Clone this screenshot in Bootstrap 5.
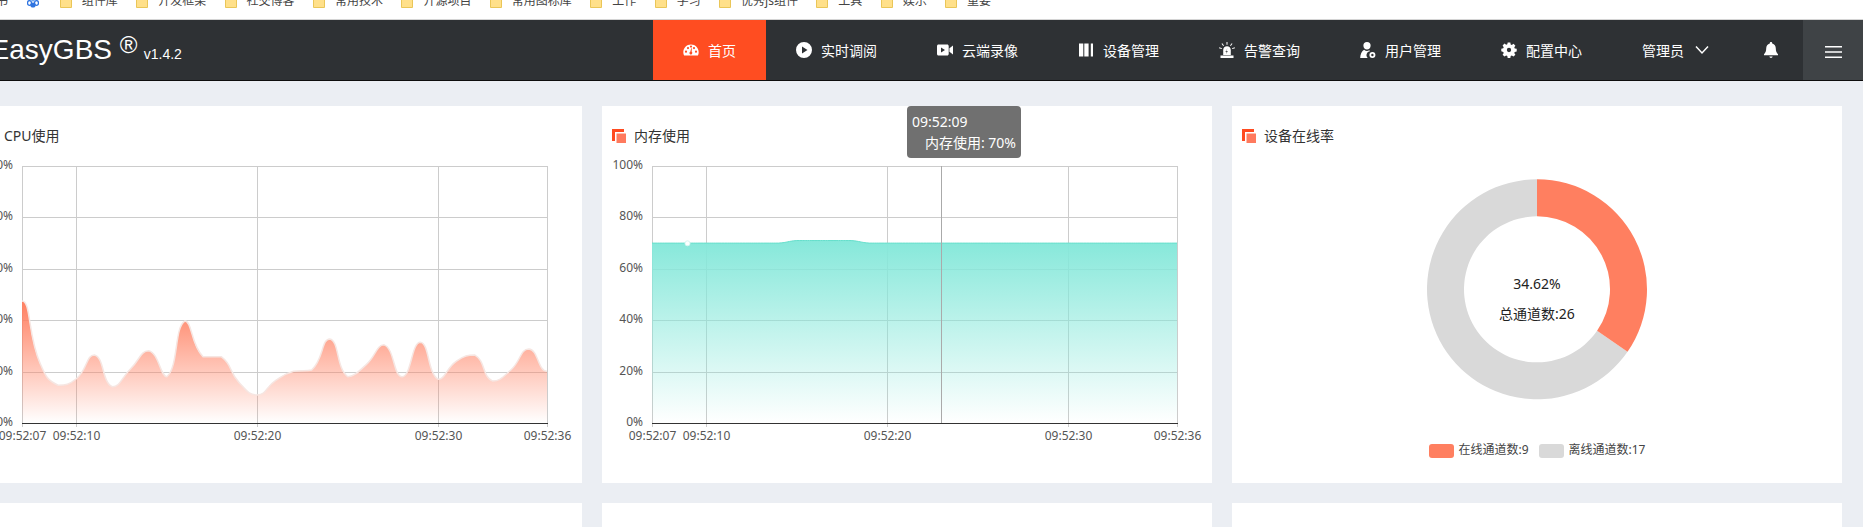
<!DOCTYPE html>
<html lang="zh-CN">
<head>
  <meta charset="UTF-8">
  <title>EasyGBS</title>
  <link href="https://cdn.jsdelivr.net/npm/bootstrap@5.3.3/dist/css/bootstrap.min.css" rel="stylesheet">
  <style>
    html, body { height: 527px; overflow: hidden; }
    body { background: #ebeef3; font-family: "Noto Sans", "Noto Sans CJK SC", sans-serif; font-size: 14px; color: #333; }

    .bookmarks { height: 20px; background: #fff; border-bottom: 1px solid #d4d4d4; overflow: hidden; font-size: 12px; line-height: 14px; color: #444; white-space: nowrap; }
    .bookmarks-row { margin-top: -6px; margin-left: -4px; gap: 18.4px; }
    .bm { display: flex; gap: 10px; align-items: center; }
    .bm-blue { margin-left: 1px; margin-right: 2px; }

    .topbar { height: 61px; background: #2e3134; border-bottom: 1px solid #0d0d0d; padding: 0; align-items: stretch; flex-wrap: nowrap; color: #fff; }
    .brand-name { margin-left: -9.4px; font-family: "Liberation Sans", sans-serif; font-size: 28px; line-height: 60px; white-space: nowrap; }
    .brand-reg { font-size: 24px; position: relative; top: -6px; }
    .brand-ver { font-size: 14px; margin-left: -1.5px; }
    .menu-item { padding: 0 30px; gap: 9px; color: #fff; text-decoration: none; white-space: nowrap; }
    .menu-item svg { width: 16px; height: 16px; flex: none; fill: #fff; }
    .menu-item.on { background: #ff4d21; }
    .menu-user { gap: 11px; }
    .menu-item svg.chevron { width: 14px; height: 14px; fill: none; }
    .menu-bell { padding: 0 24px; }
    .menu-toggle { width: 60px; background: #3f4346; padding-top: 3px; }

    .board { width: 1891px; height: 446px; overflow: hidden; margin-left: -28px; padding: 25px 21px 0 0; display: grid; grid-template-columns: repeat(3, 1fr); gap: 20px; }
    .panel { background: #fff; height: 377px; padding-top: 20px; position: relative; }
    .panel-title { padding-left: 10px; height: 20px; line-height: 20px; gap: 8px; }
    .title-mark { width: 14px; height: 14px; }
    .title-mark svg { display: block; }
    .panel svg.chart { display: block; width: 610px; height: 337px; }
    .chart text { font-family: "Noto Sans", "Noto Sans CJK SC", sans-serif; }
    .chart .ax { font-size: 12px; fill: #555; }
    .chart .lg { font-size: 12px; fill: #444; }
    .chart .mid { font-size: 14px; fill: #222; }
    .tip { position: absolute; left: 305px; top: 0; width: 114px; height: 52px; padding: 5px; background: #707070; border-radius: 4px; color: #fff; line-height: 21px; }
  </style>
</head>
<body>
  <div class="bookmarks">
    <div class="d-flex bookmarks-row" id="bookmarks"></div>
  </div>

  <nav class="navbar topbar">
    <div class="brand-name">EasyGBS <span class="brand-reg">®</span> <span class="brand-ver">v1.4.2</span></div>
    <div class="d-flex ms-auto">
      <a class="menu-item on d-flex align-items-center" href="#">
        <svg viewBox="0 0 16 16"><path d="M8 2.400C3.600 2.400.3 5.900.3 10.200c0 1.300.3 2.400.8 3.400h13.800c.5-1 .8-2.100.8-3.400 0-4.300-3.300-7.800-7.700-7.800zM3 10.800a1.100 1.100 0 1 1 0-2.200 1.100 1.100 0 0 1 0 2.200zm2-3.600a1.100 1.100 0 1 1 0-2.200 1.100 1.100 0 0 1 0 2.200zm3.900 4.800a1.400 1.400 0 0 1-2.500-.9c0-.6.4-1.100.9-1.300l.8-3.300c.1-.3.700-.2.700.1l-.1 3.200c.7.400.900 1.400.2 2.200zM8 5.700A1.100 1.100 0 1 1 8 3.500a1.100 1.100 0 0 1 0 2.200zm3 1.500a1.100 1.100 0 1 1 0-2.200 1.100 1.100 0 0 1 0 2.200zm2 3.600a1.100 1.100 0 1 1 0-2.200 1.100 1.100 0 0 1 0 2.200z" fill-rule="evenodd"/></svg>
        首页
      </a>
      <a class="menu-item d-flex align-items-center" href="#">
        <svg viewBox="0 0 16 16"><path d="M8 0a8 8 0 1 0 0 16A8 8 0 0 0 8 0zM6 4.500l5.500 3.500L6 11.500z" fill-rule="evenodd"/></svg>
        实时调阅
      </a>
      <a class="menu-item d-flex align-items-center" href="#">
        <svg viewBox="0 0 16 16"><path d="M1.500 2.400h8.700c.8 0 1.500.7 1.500 1.500v8.200c0 .8-.7 1.500-1.500 1.500H1.500C.7 13.600 0 12.900 0 12.100V3.900c0-.8.7-1.500 1.500-1.500zM4 5.600v4.800L8 8z" fill-rule="evenodd"/><path d="M12.400 6.300 16 3.600v8.800l-3.600-2.700z"/></svg>
        云端录像
      </a>
      <a class="menu-item d-flex align-items-center" href="#">
        <svg viewBox="0 0 16 16"><path d="M1 1.500h4.300v13H1zM6.300 1.500h4.300v13H6.300zM12.800 1.500H15v13h-2.200z"/></svg>
        设备管理
      </a>
      <a class="menu-item d-flex align-items-center" href="#">
        <svg viewBox="0 0 16 16"><path d="M8 4.200c-2.200 0-3.800 1.700-3.800 3.900V13h7.600V8.100C11.800 5.900 10.200 4.200 8 4.200zm.7 1.800L7.200 9h1.500l-1.400 3 .4-2.300H6.400z" fill-rule="evenodd"/><path d="M1.500 13.500h13V16h-13zM7.500 0h1v2.800h-1zM2.500 1.800l.8-.6 1.700 2.300-.8.600zM12.700 1.200l.8.600-1.700 2.300-.8-.6zM0 6.200l.3-.9 2.700.9-.3.900zM15.700 5.300l.3.900-2.700.9-.3-.9z"/></svg>
        告警查询
      </a>
      <a class="menu-item d-flex align-items-center" href="#">
        <svg viewBox="0 0 16 16"><path d="M7 0a3.600 3.600 0 0 1 3.600 3.700C10.600 5.700 9 7.500 7 7.500S3.400 5.700 3.400 3.700A3.600 3.600 0 0 1 7 0z"/><path d="M4.100 7.700C5 8.500 6 8.900 7 8.900c.8 0 1.600-.2 2.300-.7.300.3.500.7.600 1.100a3.900 3.900 0 0 0-2.300 6.700H.2C.2 12.500 1.800 9 4.100 7.700z"/><path d="M12.400 10a3 3 0 1 0 0 6 3 3 0 0 0 0-6zm0 1.800a1.200 1.200 0 1 1 0 2.400 1.200 1.200 0 0 1 0-2.400z" fill-rule="evenodd"/></svg>
        用户管理
      </a>
      <a class="menu-item d-flex align-items-center" href="#">
        <svg viewBox="-.5 -.5 17 17"><path d="M6.600 0h2.800l.4 2.100 1.200.5 1.800-1.200 2 2-1.200 1.800.5 1.200 2.100.4v2.800l-2.100.4-.5 1.200 1.200 1.800-2 2-1.800-1.200-1.200.5-.4 2.100H6.600l-.4-2.100-1.200-.5-1.800 1.200-2-2 1.200-1.800-.5-1.200L-.2 9.400V6.600l2.100-.4.5-1.200-1.200-1.800 2-2 1.800 1.200 1.200-.5zM8 5.700a2.300 2.300 0 1 0 0 4.600 2.300 2.300 0 0 0 0-4.600z" fill-rule="evenodd"/></svg>
        配置中心
      </a>
      <a class="menu-item menu-user d-flex align-items-center" href="#">
        管理员
        <svg class="chevron" viewBox="0 0 14 14"><path d="M1 3.500 7 10l6-6.500" fill="none" stroke="#fff" stroke-width="1.500"/></svg>
      </a>
      <a class="menu-item menu-bell d-flex align-items-center" href="#">
        <svg viewBox="0 0 16 16"><path d="M8 0c.7 0 1.200.5 1.200 1.200v.4c2.300.6 3.600 2.600 3.600 5 0 2.700.7 4.200 2.200 5.700v.9H1v-.9c1.500-1.500 2.200-3 2.200-5.700 0-2.400 1.300-4.400 3.600-5v-.4C6.800.5 7.300 0 8 0zM6.300 14.600h3.400A1.800 1.800 0 0 1 8 16a1.800 1.800 0 0 1-1.700-1.400z"/></svg>
      </a>
      <div class="menu-toggle d-flex align-items-center justify-content-center">
        <svg width="17" height="12" viewBox="0 0 17 12"><path d="M0 0h17v1.600H0zM0 5.200h17v1.600H0zM0 10.400h17V12H0z" fill="#fff"/></svg>
      </div>
    </div>
  </nav>

  <main class="board">
    <section class="panel">
      <div class="panel-title d-flex align-items-center"><span class="title-mark" data-mark></span><span>CPU使用</span></div>
      <svg class="chart" id="cpu" viewBox="0 0 610 337"></svg>
    </section>
    <section class="panel">
      <div class="panel-title d-flex align-items-center"><span class="title-mark" data-mark></span><span>内存使用</span></div>
      <svg class="chart" id="mem" viewBox="0 0 610 337"></svg>
      <div class="tip">
        <div>09:52:09</div>
        <div class="text-end">内存使用: 70%</div>
      </div>
    </section>
    <section class="panel">
      <div class="panel-title d-flex align-items-center"><span class="title-mark" data-mark></span><span>设备在线率</span></div>
      <svg class="chart" id="online" viewBox="0 0 610 337"></svg>
    </section>
    <section class="panel"></section>
    <section class="panel"></section>
    <section class="panel"></section>
  </main>

  <script>
    // 书签栏
    const folder = '<svg width="12" height="14" viewBox="0 0 12 14"><path d="M.5.500h7l4 3v10h-11z" fill="#ffe08a" stroke="#eac658"/></svg>';
    const paw = '<svg width="12" height="14" viewBox="0 0 12 14"><ellipse cx="2.500" cy="9" rx="2" ry="2.400" fill="none" stroke="#2f74e0" stroke-width="1.300"/><ellipse cx="9.500" cy="9" rx="2" ry="2.400" fill="none" stroke="#2f74e0" stroke-width="1.300"/><ellipse cx="6" cy="11" rx="2.600" ry="2.600" fill="#2f74e0"/><circle cx="6" cy="5.500" r="2" fill="#6ea5ee"/></svg>';
    const names = ["组件库", "开发框架", "社交博客", "常用技术", "开源项目", "常用图标库", "工作", "学习", "优秀js组件", "工具", "娱乐", "重要"];
    document.getElementById("bookmarks").innerHTML =
      '<div class="bm"><span>书</span></div><div class="bm bm-blue">' + paw + '</div>' +
      names.map(n => `<div class="bm">${folder}<span>${n}</span></div>`).join("");

    document.querySelectorAll("[data-mark]").forEach(el => {
      el.innerHTML = '<svg width="14" height="14" viewBox="0 0 14 14"><path d="M0 0h12v3H3v9H0z" fill="#ff4b20"/><path d="M4.500 4.500H14V14H4.500z" fill="#ff7a5e"/></svg>';
    });

    // 图表坐标
    const L = 50, R = 575, T = 20, B = 277, W = R - L, H = B - T;
    const seconds = 29;
    const xOf = i => L + W * i / seconds;
    const yOf = v => B - H * v / 100;

    // echarts 风格的平滑曲线：控制点长度按前后两段的距离分配
    function smooth(pts) {
      const k = 0.5;
      const dist = (a, b) => Math.hypot(a[0] - b[0], a[1] - b[1]);
      const ctrl = (i, sign) => {
        const p = pts[i], prev = pts[i - 1], next = pts[i + 1];
        if (!prev || !next) return [p[0] + sign * W / seconds * 0.5, p[1]];
        const a = dist(p, prev), b = dist(p, next);
        const ratio = sign > 0 ? b / (a + b) : a / (a + b);
        const other = sign > 0 ? next : prev;
        let cy = p[1] + sign * (next[1] - prev[1]) * k * ratio;
        cy = Math.min(Math.max(cy, Math.min(p[1], other[1])), Math.max(p[1], other[1]));
        return [p[0] + sign * (next[0] - prev[0]) * k * ratio, cy];
      };
      let d = `M${pts[0][0]} ${pts[0][1]}`;
      for (let i = 0; i < pts.length - 1; i++) {
        const c1 = ctrl(i, 1), c2 = ctrl(i + 1, -1), p1 = pts[i + 1];
        d += `C${c1[0]} ${c1[1]} ${c2[0]} ${c2[1]} ${p1[0]} ${p1[1]}`;
      }
      return d;
    }

    function lineChart(id, data, color, stroke, width, extra) {
      const pts = data.map((v, i) => [xOf(i), yOf(v)]);
      const line = smooth(pts);
      let s = `<defs><linearGradient id="g-${id}" x1="0" y1="0" x2="0" y2="1"><stop offset="0" stop-color="${color}"/><stop offset="1" stop-color="${color}" stop-opacity="0"/></linearGradient></defs>`;
      [0, 20, 40, 60, 80, 100].forEach(v => {
        const y = Math.round(yOf(v)) + .5;
        if (v) s += `<path d="M${L} ${y}H${R}" stroke="#ccc"/>`;
        s += `<text class="ax" x="41" y="${y + 2}" text-anchor="end">${v}%</text>`;
      });
      [0, 3, 13, 23, 29].forEach(i => {
        const x = Math.floor(xOf(i)) + .5;
        s += `<path d="M${x} ${T}V${B}" stroke="#ccc"/><path d="M${x} ${B}v4" stroke="#ccc"/>`;
        s += `<text class="ax" x="${x}" y="294" text-anchor="middle">09:52:${String(7 + i).padStart(2, "0")}</text>`;
      });
      s += `<path d="${line}L${R} ${B}L${L} ${B}Z" fill="url(#g-${id})"/>`;
      s += `<path d="${line}" fill="none" stroke="${stroke}" stroke-width="${width}"/>`;
      s += `<path d="M${L} ${B + .5}H${R + 1}" stroke="#333"/>`;
      document.getElementById(id).innerHTML = s + (extra || "");
    }

    const cpu = [47.5, 23.2, 14.7, 17.2, 26.5, 14.1, 21.1, 28.1, 18, 39.7, 25.8, 25.8, 15.7, 10.9, 16.5, 20.1, 20.6, 32.7, 18, 22.6, 30.4, 18, 31.4, 17, 24.1, 26.5, 16.3, 20.6, 28.8, 20.1];
    lineChart("cpu", cpu, "#ff7f60", "#f6e6e2", 1.5);

    const mem = cpu.map(() => 70);
    for (let i = 8; i <= 11; i++) mem[i] = 71;
    lineChart("mem", mem, "#86e8da", "#66dfcc", 1,
      `<path d="M339.500 ${T}V${B}" stroke="#aaa"/><circle cx="85.500" cy="97.300" r="2.500" fill="#fff" stroke="#d8f6f1"/>`);

    // 环形图
    const cx = 305, cy = 143.300, r1 = 110, r0 = 73;
    const a = 2 * Math.PI * 9 / 26;
    const px = (r, t) => (cx + r * Math.sin(t)).toFixed(2), py = (r, t) => (cy - r * Math.cos(t)).toFixed(2);
    const arc = (from, to, fill) => {
      const big = to - from > Math.PI ? 1 : 0;
      return `<path fill="${fill}" d="M${px(r1, from)} ${py(r1, from)}A${r1} ${r1} 0 ${big} 1 ${px(r1, to)} ${py(r1, to)}L${px(r0, to)} ${py(r0, to)}A${r0} ${r0} 0 ${big} 0 ${px(r0, from)} ${py(r0, from)}Z"/>`;
    };
    document.getElementById("online").innerHTML =
      arc(a, 2 * Math.PI - 1e-4, "#d9d9d9") + arc(0, a, "#ff7f60") +
      `<text class="mid" x="305" y="142.500" text-anchor="middle">34.62%</text>` +
      `<text class="mid" x="305" y="172.500" text-anchor="middle">总通道数:26</text>` +
      `<rect x="197" y="298" width="25" height="14" rx="3" fill="#ff7f60"/>` +
      `<text class="lg" x="226.500" y="308" >在线通道数:9</text>` +
      `<rect x="307" y="298" width="25" height="14" rx="3" fill="#d9d9d9"/>` +
      `<text class="lg" x="336.500" y="308">离线通道数:17</text>`;
  </script>
</body>
</html>
